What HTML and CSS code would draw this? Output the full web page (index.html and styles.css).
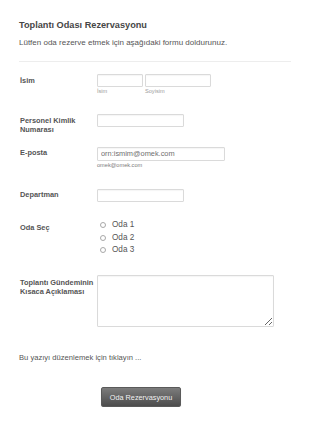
FILE: index.html
```html
<!DOCTYPE html>
<html lang="tr">
<head>
<meta charset="utf-8">
<title>Toplantı Odası Rezervasyonu</title>
<link rel="stylesheet" href="styles.css">
</head>
<body>
<form class="form">
  <div class="header">
    <h1 class="title">Toplantı Odası Rezervasyonu</h1>
    <p class="subtitle">Lütfen oda rezerve etmek için aşağıdaki formu doldurunuz.</p>
  </div>

  <div class="row row-name">
    <label class="label">İsim</label>
    <div class="field name-field">
      <div class="name-part">
        <input class="input input-first" type="text">
        <span class="sublabel">İsim</span>
      </div>
      <div class="name-part">
        <input class="input input-last" type="text">
        <span class="sublabel">Soyisim</span>
      </div>
    </div>
  </div>

  <div class="row row-id">
    <label class="label">Personel Kimlik Numarası</label>
    <div class="field">
      <input class="input input-medium" type="text">
    </div>
  </div>

  <div class="row row-email">
    <label class="label">E-posta</label>
    <div class="field">
      <input class="input input-email" type="text" value="orn:ismim@omek.com">
      <span class="sublabel sublabel-email">omek@omek.com</span>
    </div>
  </div>

  <div class="row row-dept">
    <label class="label">Departman</label>
    <div class="field">
      <input class="input input-medium" type="text">
    </div>
  </div>

  <div class="row row-room">
    <label class="label label-room">Oda Seç</label>
    <div class="field radios">
      <label class="radio"><input type="radio" name="oda"><span>Oda 1</span></label>
      <label class="radio"><input type="radio" name="oda"><span>Oda 2</span></label>
      <label class="radio"><input type="radio" name="oda"><span>Oda 3</span></label>
    </div>
  </div>

  <div class="row row-agenda">
    <label class="label label-agenda">Toplantı Gündeminin Kısaca Açıklaması</label>
    <div class="field">
      <textarea class="textarea"></textarea>
    </div>
  </div>

  <p class="edit-text">Bu yazıyı düzenlemek için tıklayın ...</p>

  <div class="actions">
    <button class="submit" type="button">Oda Rezervasyonu</button>
  </div>
</form>
</body>
</html>
```

FILE: styles.css
```css
* {
  box-sizing: border-box;
}

html, body {
  margin: 0;
  padding: 0;
  background: #ffffff;
}

body {
  font-family: "Liberation Sans", Arial, sans-serif;
  color: #555555;
}

.form {
  width: 310px;
  padding: 20px 19px 0 19px;
}

.header {
  width: 272px;
  padding-bottom: 13px;
  border-bottom: 1px solid #ededed;
  margin-bottom: 12px;
}

.title {
  margin: 0;
  font-size: 9.2px;
  line-height: 11px;
  font-weight: bold;
  color: #464646;
}

.subtitle {
  margin: 7px 0 0 0;
  font-size: 8px;
  line-height: 10px;
  color: #555555;
}

.row {
  display: grid;
  grid-template-columns: 78px 1fr;
  align-items: start;
}

.row-name { margin-bottom: 19px; }
.row-id { margin-bottom: 13px; }
.row-email { margin-bottom: 20px; }
.row-dept { margin-bottom: 17px; }
.row-room { margin-bottom: 19px; }

.label {
  display: block;
  padding: 1.5px 4px 0 1px;
  font-size: 7.4px;
  line-height: 9px;
  font-weight: bold;
  color: #555555;
}

.label-room {
  padding-top: 4px;
}

.label-agenda {
  padding-top: 2.5px;
  padding-right: 0;
}

.field {
  display: flex;
  flex-direction: column;
  align-items: flex-start;
}

.name-field {
  flex-direction: row;
  gap: 2px;
}

.name-part {
  display: flex;
  flex-direction: column;
}

.input {
  display: block;
  height: 13px;
  margin: 0;
  padding: 0 3px;
  border: 1px solid #dadada;
  border-radius: 1px;
  background: #ffffff;
  box-shadow: inset 0 1px 1px rgba(0, 0, 0, 0.04);
  font-family: "Liberation Sans", Arial, sans-serif;
  font-size: 7.4px;
  color: #6f6f6f;
  outline: none;
}

.input-first { width: 46px; }
.input-last { width: 66px; }
.input-medium { width: 87px; }
.input-email { width: 128px; height: 14px; }

.sublabel {
  display: block;
  font-size: 5.6px;
  line-height: 8px;
  color: #9a9a9a;
}

.sublabel-email {
  margin-top: 0;
  color: #7a7a7a;
}

.radios {
  gap: 0;
}

.radio {
  display: flex;
  align-items: center;
  height: 12.5px;
  font-size: 8.2px;
  color: #555555;
}

.radio input {
  -webkit-appearance: none;
  appearance: none;
  width: 6px;
  height: 6px;
  margin: 1px 6px 0 3px;
  border: 1px solid #a8a8a8;
  border-radius: 50%;
  background: #ffffff;
}

.textarea {
  display: block;
  width: 177px;
  height: 52px;
  margin: 0;
  padding: 2px;
  border: 1px solid #dadada;
  border-radius: 1px;
  background: #ffffff;
  box-shadow: inset 0 1px 1px rgba(0, 0, 0, 0.04);
  font-family: "Liberation Sans", Arial, sans-serif;
  font-size: 7.4px;
  outline: none;
}

.edit-text {
  margin: 26px 0 0 0;
  font-size: 7.6px;
  line-height: 10px;
  color: #555555;
}

.actions {
  margin-top: 24px;
  padding-left: 82px;
}

.submit {
  display: block;
  width: 80px;
  height: 20px;
  padding: 0;
  border: 1px solid #5a5a5a;
  border-radius: 2px;
  background: linear-gradient(#7c7c7c, #4c4c4c);
  box-shadow: 0 1px 1px rgba(0, 0, 0, 0.15);
  font-family: "Liberation Sans", Arial, sans-serif;
  font-size: 7.3px;
  color: #f2f2f2;
}
```
